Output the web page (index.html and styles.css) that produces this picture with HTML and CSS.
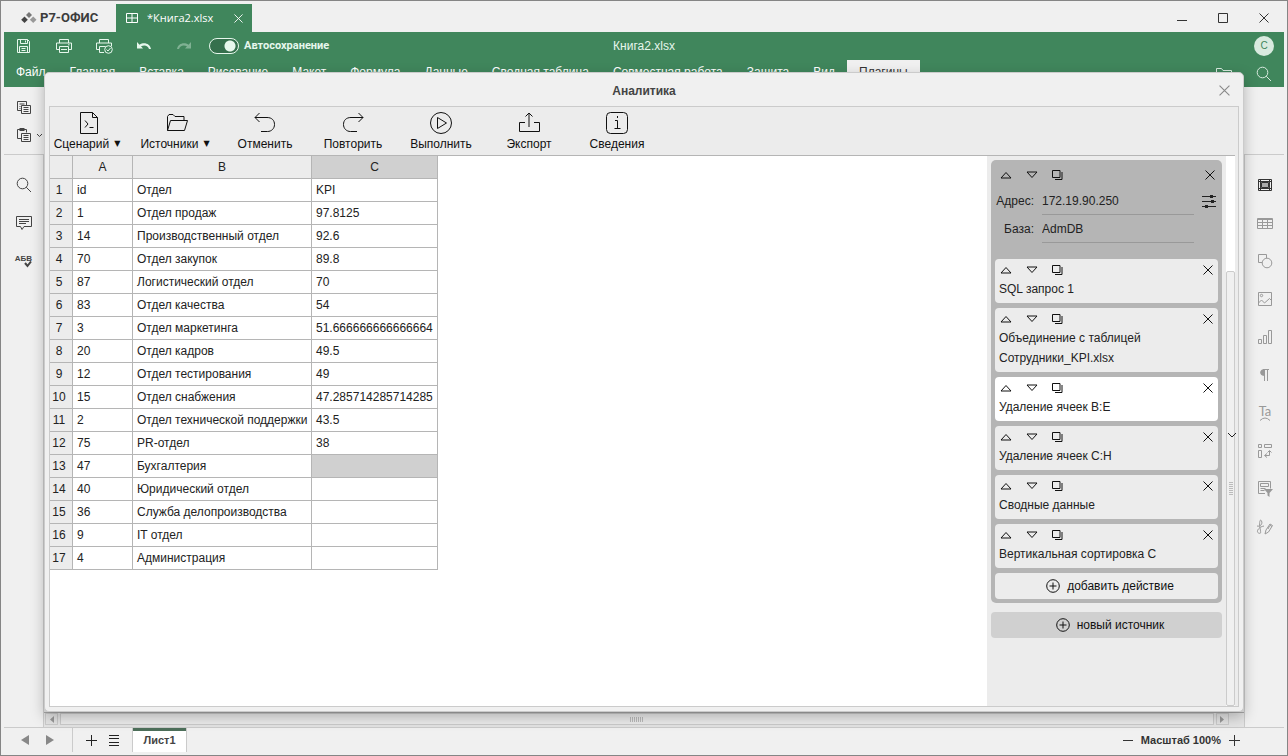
FILE: index.html
```
<!DOCTYPE html>
<html lang="ru">
<head>
<meta charset="utf-8">
<title>Книга2.xlsx</title>
<link rel="stylesheet" href="styles.css">
</head>
<body>
<svg class="sprite" aria-hidden="true">
  <symbol id="up" viewBox="0 0 12 8"><path d="M1 7h10L6 1.5z"/></symbol>
  <symbol id="down" viewBox="0 0 12 8"><path d="M1 1h10L6 6.5z"/></symbol>
  <symbol id="copy" viewBox="0 0 11 10"><path d="M.5.5h7.500v7h-7.500zM10 2v7.500H3" /></symbol>
  <symbol id="cross" viewBox="0 0 10 10"><path d="M.5.5l9 9M9.500.5l-9 9"/></symbol>
  <symbol id="plus-circle" viewBox="0 0 14 14"><circle cx="7" cy="7" r="6.300"/><path d="M7 3.500v7M3.500 7h7"/></symbol>
  <symbol id="search" viewBox="0 0 16 16"><circle cx="6.500" cy="6.500" r="5.300"/><path d="M10.200 10.200l4.800 4.800"/></symbol>
</svg>

<header class="titlebar">
  <div class="brand">
    <svg width="16" height="12" viewBox="0 0 16 12"><path d="M8 0l3 3-3 3-3-3z" fill="#777"/><path d="M3.500 4.500l3.300 3.300-3.300 3.300L.2 7.800z" fill="#444"/><path d="M12.200 4.500l3.300 3.300-3.300 3.300-3.300-3.300z" fill="#999"/></svg>
    <span>Р7-ОФИС</span>
  </div>
  <div class="doc-tab">
    <svg width="12" height="10" viewBox="0 0 12 10"><path d="M.5.5h11v9H.5zM6 .5v9M.5 5h11"/></svg>
    <span>*Книга2.xlsx</span>
    <button class="icon-btn" aria-label="Закрыть вкладку"><svg width="9" height="9"><use href="#cross"/></svg></button>
  </div>
  <div class="window-controls">
    <button class="icon-btn" aria-label="Свернуть"><svg width="10" height="10"><path d="M0 7.500h10"/></svg></button>
    <button class="icon-btn" aria-label="Развернуть"><svg width="10" height="10"><path d="M.5.5h9v9h-9z"/></svg></button>
    <button class="icon-btn" aria-label="Закрыть"><svg width="10" height="10"><use href="#cross"/></svg></button>
  </div>
</header>

<section class="appbar">
  <div class="quick">
    <button class="icon-btn" aria-label="Сохранить"><svg width="16" height="16"><path d="M1.500 1.500h10l2 2v11h-12zM4.500 1.500v4h7v-4M9.500 2.500v2M3.500 14.500v-6h8v6M5.500 10.500h4M5.500 12.500h4"/></svg></button>
    <button class="icon-btn" aria-label="Печать"><svg width="16" height="16"><path d="M3.500 5V1.500h9V5M3.500 11.500h-3V5h15v6.500h-3M3.500 8.500h9v6h-9zM12 6.800h1.500M5 11.500h6"/></svg></button>
    <button class="icon-btn" aria-label="Быстрая печать"><svg width="17" height="16"><path d="M3.500 5V1.500h9V5M3.500 11.500h-3V5h15v3M8 14.500H3.500v-6h6"/><circle cx="12.500" cy="11.500" r="3.800"/><path d="M10.500 11.500l1.500 1.500 2.500-3"/></svg></button>
    <button class="icon-btn" aria-label="Отменить правку"><svg width="16" height="16"><path class="solid" d="M1 4v6.500h6L5 8.300c4-2 7-.3 8 2.700h2C14 5.500 8 3.500 3.500 6.700z"/></svg></button>
    <button class="icon-btn" disabled aria-label="Вернуть правку"><svg width="16" height="16"><path class="solid" d="M15 4v6.500H9l2-2.200c-4-2-7-.3-8 2.700H1C2 5.500 8 3.500 12.500 6.700z"/></svg></button>
    <label class="autosave"><input type="checkbox" checked><span>Автосохранение</span></label>
    <h1>Книга2.xlsx</h1>
    <button class="avatar">C</button>
  </div>
  <nav class="menu">
    <button>Файл</button><button>Главная</button><button>Вставка</button><button>Рисование</button><button>Макет</button><button>Формула</button><button>Данные</button><button>Сводная таблица</button><button>Совместная работа</button><button>Защита</button><button>Вид</button><button class="active">Плагины</button>
    <span class="menu-tools">
      <button class="icon-btn" aria-label="Открыть папку"><svg width="16" height="14"><path d="M.5 13V1.500h5l1.500 2h8.500V13z"/></svg></button>
      <button class="icon-btn" aria-label="Поиск"><svg width="16" height="16"><use href="#search"/></svg></button>
    </span>
  </nav>
</section>

<section class="ribbon">
  <div class="ribbon-tools">
    <button class="icon-btn" aria-label="Копировать"><svg width="16" height="14"><path d="M4 9.500H.5v-9h9V4M2.500 3h5M2.500 5.500h1M2.500 7.500h1M4.500 4.500h9v8h-9zM6.500 6.500h5M6.500 8.500h5M6.500 10.500h5"/></svg></button>
    <div class="paste">
      <button class="icon-btn" aria-label="Вставить"><svg width="16" height="15"><path d="M4 10.500H.5v-9h9V4.500M4.500 5.500h9v8h-9zM6.500 7.500h5M6.500 9.500h5M6.500 11.500h5"/><path class="solid" d="M2.500 0h5v3h-5z"/></svg></button>
      <button class="icon-btn" aria-label="Параметры вставки"><svg width="7" height="5"><path d="M1 1l2.500 2.500L6 1"/></svg></button>
    </div>
  </div>
</section>

<main class="workspace">
  <aside class="side left">
    <button class="icon-btn" aria-label="Найти"><svg width="16" height="16"><use href="#search"/></svg></button>
    <button class="icon-btn" aria-label="Комментарии"><svg width="16" height="16"><path d="M.5 1.500h15v10H8l-2 3-1.500-3h-4zM3 4.500h10M3 6.500h10M3 8.500h7"/></svg></button>
    <button class="icon-btn spell" aria-label="Проверка орфографии"><span>АБВ</span><svg width="8" height="7"><path d="M1 2l2.500 3L7 .5"/></svg></button>
  </aside>
  <div class="sheet">
    <div class="hscroll">
      <button class="icon-btn" aria-label="Влево"><svg width="5" height="7"><path class="solid" d="M5 0v7L1 3.500z"/></svg></button>
      <div class="hthumb"></div>
      <button class="icon-btn" aria-label="Вправо"><svg width="5" height="7"><path class="solid" d="M0 0v7l4-3.500z"/></svg></button>
    </div>
  </div>
  <aside class="side right">
    <button class="icon-btn on" aria-label="Ячейки"><svg width="16" height="16"><path d="M1.500 2.500h13v11h-13zM1.500 4.500h13M1.500 11.500h13M3.500 2.500v11M12.500 2.500v11"/><path class="fillgray" d="M4.500 5.500h7v5h-7z"/></svg></button>
    <button class="icon-btn" aria-label="Таблица"><svg width="16" height="16"><path d="M.5 3.500h15v10H.5zM.5 7.500h15M.5 10.500h15M5.500 4v9M10.500 4v9"/><path d="M.5 4.500h15"/></svg></button>
    <button class="icon-btn" aria-label="Фигура"><svg width="16" height="16"><path d="M5 9.500H1.500v-8h8V5"/><circle cx="10" cy="10" r="4.800"/></svg></button>
    <button class="icon-btn" aria-label="Изображение"><svg width="16" height="16"><path d="M1.500 1.500h13v13h-13zM1.500 12l3-3 3 3 5-4.500 2 2"/><circle cx="4.500" cy="4.500" r="1.200"/></svg></button>
    <button class="icon-btn" aria-label="Диаграмма"><svg width="16" height="16"><path d="M1.500 10.500h3v4h-3zM6.500 6.500h3v8h-3zM11.500 1.500h3v13h-3z"/></svg></button>
    <button class="icon-btn" aria-label="Абзац"><svg width="16" height="16"><path class="solid" d="M8 2v7C1.500 9 1.500 2 8 2z"/><path d="M7.500 2v12M10.500 2v12M6 2.500h6"/></svg></button>
    <button class="icon-btn textart" aria-label="Текст"><span>Ta</span><svg width="10" height="4"><path d="M0 3.500q5-5 10 0"/></svg></button>
    <button class="icon-btn" aria-label="Сводная таблица"><svg width="16" height="16"><path d="M1.500 1.500h3v3h-3zM7.500 1.500h7v3h-7zM1.500 7.500h3v7h-3zM8 12.500h4.500V8M10 10.500l-2.500 2 2.500 2M10.500 9.500l2-2 2 2"/></svg></button>
    <button class="icon-btn" aria-label="Срез"><svg width="16" height="16"><path d="M8 12.500H1.500v-12h12v7M3.500 2.500h8v3h-8zM3.500 7.500h5M3.500 9.500h4"/><path class="solid" d="M7 8h9l-3.500 4v4l-2-1.500V12z"/></svg></button>
    <button class="icon-btn" aria-label="Подпись"><svg width="18" height="16"><path d="M1 7c3 1 6-2 4.500-5S3 4 4 9s1 6-1.500 5S2 8 8 7M9 15l1-4 4-6 2.500 1.500-4 6.500zM13.500 6l2.500 1.500M12 10l1.500-3"/></svg></button>
  </aside>
</main>

<footer class="statusbar">
  <div class="sheet-nav">
    <button class="icon-btn" aria-label="Предыдущий лист"><svg width="8" height="10"><path class="solid" d="M8 0v10L0 5z"/></svg></button>
    <button class="icon-btn" aria-label="Следующий лист"><svg width="8" height="10"><path class="solid" d="M0 0v10l8-5z"/></svg></button>
  </div>
  <div class="sheet-actions">
    <button class="icon-btn" aria-label="Добавить лист"><svg width="11" height="11"><path d="M5.500 0v11M0 5.500h11"/></svg></button>
    <button class="icon-btn" aria-label="Список листов"><svg width="10" height="11"><path d="M0 .5h10M0 3.500h10M0 7.500h10M0 10.500h10"/></svg></button>
  </div>
  <button class="sheet-tab">Лист1</button>
  <div class="zoom">
    <button class="icon-btn" aria-label="Уменьшить"><svg width="10" height="11"><path d="M0 5.500h10"/></svg></button>
    <span>Масштаб 100%</span>
    <button class="icon-btn" aria-label="Увеличить"><svg width="11" height="11"><path d="M5.500 0v11M0 5.500h11"/></svg></button>
  </div>
</footer>

<section class="dialog" role="dialog" aria-labelledby="dialog-title">
  <header class="dialog-head">
    <h2 id="dialog-title">Аналитика</h2>
    <button class="icon-btn" aria-label="Закрыть окно"><svg width="11" height="11" viewBox="0 0 10 10"><use href="#cross"/></svg></button>
  </header>
  <div class="dialog-body">
    <div class="toolbar">
      <button><svg width="24" height="24"><path d="M3.500 1.500h12l5 5v16h-17zM15.500 1.500v5h5M8 9.500l3 3.500-3 3.500M12.500 16.500h4"/></svg><span>Сценарий<i>▼</i></span></button>
      <button><svg width="24" height="24"><path d="M2.500 19.500v-14l1.500-2h4l2 2h9v4M2.500 19.500l3-10h17l-3 10z"/></svg><span>Источники<i>▼</i></span></button>
      <button><svg width="24" height="24"><path d="M6.500 2L2 6.500 6.500 11M2 6.500h12c5 0 7.500 3 7.500 7s-3 7-7 7H8"/></svg><span>Отменить</span></button>
      <button><svg width="24" height="24"><path d="M17.500 2L22 6.500 17.500 11M22 6.500H10c-5 0-7.500 3-7.500 7s3 7 7 7H16"/></svg><span>Повторить</span></button>
      <button><svg width="24" height="24"><circle cx="12" cy="12" r="10.500"/><path d="M8.500 6.500v11l9-5.500z"/></svg><span>Выполнить</span></button>
      <button><svg width="24" height="24"><path d="M12 16V2M8.500 5.500L12 2l3.500 3.500M8 11.500H2.500v9h20v-9H17"/></svg><span>Экспорт</span></button>
      <button><svg width="24" height="24"><rect x="1.500" y="1.500" width="21" height="21" rx="4"/><path d="M10 9.500h2.500v8M9.500 17.500h6M12.500 5v2"/></svg><span>Сведения</span></button>
    </div>
    <div class="content">
      <div class="grid">
        <table>
          <colgroup><col class="c-num"><col class="c-a"><col class="c-b"><col class="c-c"></colgroup>
          <thead><tr><th></th><th>A</th><th>B</th><th class="sel">C</th></tr></thead>
          <tbody>
            <tr><th>1</th><td>id</td><td>Отдел</td><td>KPI</td></tr>
            <tr><th>2</th><td>1</td><td>Отдел продаж</td><td>97.8125</td></tr>
            <tr><th>3</th><td>14</td><td>Производственный отдел</td><td>92.6</td></tr>
            <tr><th>4</th><td>70</td><td>Отдел закупок</td><td>89.8</td></tr>
            <tr><th>5</th><td>87</td><td>Логистический отдел</td><td>70</td></tr>
            <tr><th>6</th><td>83</td><td>Отдел качества</td><td>54</td></tr>
            <tr><th>7</th><td>3</td><td>Отдел маркетинга</td><td>51.666666666666664</td></tr>
            <tr><th>8</th><td>20</td><td>Отдел кадров</td><td>49.5</td></tr>
            <tr><th>9</th><td>12</td><td>Отдел тестирования</td><td>49</td></tr>
            <tr><th>10</th><td>15</td><td>Отдел снабжения</td><td>47.285714285714285</td></tr>
            <tr><th>11</th><td>2</td><td>Отдел технической поддержки</td><td>43.5</td></tr>
            <tr><th>12</th><td>75</td><td>PR-отдел</td><td>38</td></tr>
            <tr><th>13</th><td>47</td><td>Бухгалтерия</td><td class="sel"></td></tr>
            <tr><th>14</th><td>40</td><td>Юридический отдел</td><td></td></tr>
            <tr><th>15</th><td>36</td><td>Служба делопроизводства</td><td></td></tr>
            <tr><th>16</th><td>9</td><td>IT отдел</td><td></td></tr>
            <tr><th>17</th><td>4</td><td>Администрация</td><td></td></tr>
          </tbody>
        </table>
      </div>
      <div class="pipeline">
        <article class="source">
          <div class="controls"><button class="icon-btn" aria-label="Выше"><svg width="12" height="8"><use href="#up"/></svg></button><button class="icon-btn" aria-label="Ниже"><svg width="12" height="8"><use href="#down"/></svg></button><button class="icon-btn" aria-label="Дублировать"><svg width="11" height="10"><use href="#copy"/></svg></button><button class="icon-btn remove" aria-label="Удалить"><svg width="10" height="10"><use href="#cross"/></svg></button></div>
          <div class="fields">
            <label for="addr">Адрес:</label><input id="addr" type="text" value="172.19.90.250">
            <button class="icon-btn" aria-label="Настройки"><svg width="14" height="14"><path d="M0 2.500h14M0 7.500h14M0 12.500h14"/><path class="solid" d="M8 1h3v3H8zM9 6h3v3H9zM3 11h3v3H3z"/></svg></button>
            <label for="base">База:</label><input id="base" type="text" value="AdmDB">
          </div>
          <div class="step"><div class="controls"><button class="icon-btn" aria-label="Выше"><svg width="12" height="8"><use href="#up"/></svg></button><button class="icon-btn" aria-label="Ниже"><svg width="12" height="8"><use href="#down"/></svg></button><button class="icon-btn" aria-label="Дублировать"><svg width="11" height="10"><use href="#copy"/></svg></button><button class="icon-btn remove" aria-label="Удалить"><svg width="10" height="10"><use href="#cross"/></svg></button></div><p>SQL запрос 1</p></div>
          <div class="step"><div class="controls"><button class="icon-btn" aria-label="Выше"><svg width="12" height="8"><use href="#up"/></svg></button><button class="icon-btn" aria-label="Ниже"><svg width="12" height="8"><use href="#down"/></svg></button><button class="icon-btn" aria-label="Дублировать"><svg width="11" height="10"><use href="#copy"/></svg></button><button class="icon-btn remove" aria-label="Удалить"><svg width="10" height="10"><use href="#cross"/></svg></button></div><p>Объединение с таблицей<br>Сотрудники_KPI.xlsx</p></div>
          <div class="step current"><div class="controls"><button class="icon-btn" aria-label="Выше"><svg width="12" height="8"><use href="#up"/></svg></button><button class="icon-btn" aria-label="Ниже"><svg width="12" height="8"><use href="#down"/></svg></button><button class="icon-btn" aria-label="Дублировать"><svg width="11" height="10"><use href="#copy"/></svg></button><button class="icon-btn remove" aria-label="Удалить"><svg width="10" height="10"><use href="#cross"/></svg></button></div><p>Удаление ячеек B:E</p></div>
          <div class="step"><div class="controls"><button class="icon-btn" aria-label="Выше"><svg width="12" height="8"><use href="#up"/></svg></button><button class="icon-btn" aria-label="Ниже"><svg width="12" height="8"><use href="#down"/></svg></button><button class="icon-btn" aria-label="Дублировать"><svg width="11" height="10"><use href="#copy"/></svg></button><button class="icon-btn remove" aria-label="Удалить"><svg width="10" height="10"><use href="#cross"/></svg></button></div><p>Удаление ячеек C:H</p></div>
          <div class="step"><div class="controls"><button class="icon-btn" aria-label="Выше"><svg width="12" height="8"><use href="#up"/></svg></button><button class="icon-btn" aria-label="Ниже"><svg width="12" height="8"><use href="#down"/></svg></button><button class="icon-btn" aria-label="Дублировать"><svg width="11" height="10"><use href="#copy"/></svg></button><button class="icon-btn remove" aria-label="Удалить"><svg width="10" height="10"><use href="#cross"/></svg></button></div><p>Сводные данные</p></div>
          <div class="step"><div class="controls"><button class="icon-btn" aria-label="Выше"><svg width="12" height="8"><use href="#up"/></svg></button><button class="icon-btn" aria-label="Ниже"><svg width="12" height="8"><use href="#down"/></svg></button><button class="icon-btn" aria-label="Дублировать"><svg width="11" height="10"><use href="#copy"/></svg></button><button class="icon-btn remove" aria-label="Удалить"><svg width="10" height="10"><use href="#cross"/></svg></button></div><p>Вертикальная сортировка C</p></div>
          <button class="add"><svg width="14" height="14"><use href="#plus-circle"/></svg>добавить действие</button>
        </article>
        <button class="add new-source"><svg width="14" height="14"><use href="#plus-circle"/></svg>новый источник</button>
      </div>
      <div class="vscroll">
        <div class="vthumb">
          <span class="grip"></span>
          <svg class="chevron" width="10" height="6"><path d="M1 1l4 4 4-4"/></svg>
        </div>
      </div>
    </div>
  </div>
</section>
</body>
</html>
```

FILE: styles.css
```
* { box-sizing: border-box; }

body {
  margin: 0;
  height: 100vh;
  display: flex;
  flex-direction: column;
  position: relative;
  padding: 0 3px;
  border: 1px solid #858585;
  background: #f0f0f0;
  color: #222;
  font: 12px/20px "Liberation Sans", Arial, sans-serif;
  overflow: hidden;
}

button, input { font: inherit; color: inherit; }
button { border: 0; padding: 0; margin: 0; background: none; white-space: nowrap; }
h1, h2, p { margin: 0; font-size: inherit; }
svg { display: block; fill: none; stroke: currentColor; stroke-width: 1; flex: none; }
.solid { fill: currentColor; stroke: none; }
.fillgray { fill: #aaa; }
.sprite { display: none; }
.icon-btn { display: flex; align-items: center; justify-content: center; }

/* Title bar */
.titlebar { flex: none; height: 31px; display: flex; align-items: flex-end; }
.brand {
  width: 112px;
  height: 28px;
  display: flex;
  align-items: center;
  gap: 3px;
  padding-left: 17px;
  color: #3c3c3c;
  font: bold 13px/28px Roboto, sans-serif;
}
.brand svg { stroke: none; }
.doc-tab {
  width: 136px;
  height: 28px;
  display: flex;
  align-items: center;
  padding: 0 9px 0 10px;
  background: #40865c;
  color: #fff;
  font: 11px/28px "Open Sans", sans-serif;
}
.doc-tab span { flex: 1; padding-left: 9px; }
.window-controls {
  margin-left: auto;
  height: 31px;
  display: flex;
  align-items: center;
  gap: 31px;
  padding: 2px 15px 0 0;
  color: #333;
}

/* Green header */
.appbar { flex: none; height: 55px; background: #40865c; color: #fff; }
.quick {
  position: relative;
  height: 28px;
  display: flex;
  align-items: center;
  padding: 0 10px 0 12px;
  color: #e6f7ec;
}
.quick > .icon-btn { width: 16px; margin-right: 24px; }
.quick > .icon-btn:disabled { color: #7fb193; }
.autosave {
  display: flex;
  align-items: center;
  gap: 5px;
  margin-left: -7px;
  font: bold 11px/20px Roboto, sans-serif;
}
.autosave input {
  appearance: none;
  width: 30px;
  height: 16px;
  margin: 0;
  border: 1px solid #e6f7ec;
  border-radius: 8px;
  background: radial-gradient(circle at 20px 7px, #e6f7ec 5px, #35704d 6px);
}
.quick h1 {
  position: absolute;
  left: 0;
  right: 0;
  text-align: center;
  font-weight: normal;
  font-size: 12px;
  pointer-events: none;
}
.avatar {
  width: 20px;
  height: 20px;
  margin-left: auto;
  border-radius: 50%;
  background: #d9eadf;
  color: #40865c;
  font-size: 10px;
}
.menu { height: 27px; display: flex; font-size: 12px; }
.menu > button { padding: 0 12px; line-height: 24px; height: 27px; padding-bottom: 3px; }
.menu > .active { background: #f0f0f0; color: #333; }
.menu-tools { margin-left: auto; display: flex; gap: 24px; padding-right: 12px; color: #d9eadf; }

/* Ribbon */
.ribbon { flex: none; height: 68px; border-bottom: 1px solid #cbcbcb; color: #444; }
.ribbon-tools { padding: 14px 0 0 13px; display: flex; flex-direction: column; gap: 13px; align-items: flex-start; }
.paste { display: flex; gap: 3px; }

/* Sheet area */
.workspace { flex: 1; min-height: 0; display: flex; }
.side { width: 40px; display: flex; flex-direction: column; align-items: center; padding-top: 22px; gap: 22px; color: #444; }
.side .icon-btn { height: 16px; }
.left { border-right: 1px solid #cbcbcb; }
.right { border-left: 1px solid #cbcbcb; color: #999; padding-left: 1px; }
.right .on { color: #333; }
.spell { flex-direction: column; }
.spell span { font: bold 8px/8px "Liberation Sans", sans-serif; }
.spell svg { margin: -2px 0 0 8px; stroke-width: 2; }
.textart { flex-direction: column; }
.textart span { font: 13px/12px Lato, sans-serif; }
.sheet { flex: 1; display: flex; flex-direction: column; justify-content: flex-end; background: #e4e4e4; }
.hscroll {
  height: 15px;
  display: flex;
  gap: 2px;
  padding: 0 15px 2px 1px;
  border-top: 1px solid #a8a8a8;
  background: #e4e4e4;
}
.hscroll .icon-btn { width: 13px; border: 1px solid #cbcbcb; color: #999; }
.hthumb { flex: 1; border: 1px solid #cbcbcb; background: repeating-linear-gradient(90deg, #bbb 0 1px, transparent 1px 2px) center / 14px 5px no-repeat #ececec; }

/* Status bar */
.statusbar { flex: none; height: 28px; display: flex; border-top: 1px solid #cbcbcb; color: #222; }
.sheet-nav { width: 69px; display: flex; align-items: center; gap: 17px; padding: 0 0 0 17px; margin-bottom: 3px; border-right: 1px solid #cbcbcb; color: #888; }
.sheet-actions { width: 59px; display: flex; align-items: center; gap: 12px; padding-left: 13px; margin-bottom: 3px; }
.sheet-tab {
  width: 55px;
  height: 24px;
  border: 1px solid #cbcbcb;
  border-width: 0 1px;
  background: linear-gradient(#4d6f5a 3px, #fff 3px);
  color: #444;
  font-size: 11px;
  font-weight: bold;
}
.zoom { margin-left: auto; display: flex; align-items: center; gap: 8px; padding: 0 44px 0 0; margin-bottom: 3px; color: #333; font-size: 11px; font-weight: bold; }

/* Dialog window over the workspace */
.dialog {
  position: absolute;
  inset: 71px 43px 43px;
  display: flex;
  flex-direction: column;
  padding: 0 4px 4px;
  border: 1px solid #cbcbcb;
  border-radius: 5px;
  background: #f0f0f0;
  box-shadow: 0 5px 14px rgba(0, 0, 0, .25);
}
.dialog-head { height: 33px; display: flex; align-items: center; position: relative; justify-content: flex-end; padding: 2px 9px 0 0; color: #888; }
.dialog-head h2 { flex: 1; padding-left: 20px; text-align: center; color: #444; }
.dialog-body { flex: 1; min-height: 0; display: flex; flex-direction: column; border: 1px solid #cbcbcb; background: #ececec; }
.toolbar { flex: none; height: 49px; display: flex; gap: 10px; margin-right: 3px; border-bottom: 1px solid #b5b5b5; color: #111; }
.toolbar button { width: 78px; display: flex; flex-direction: column; align-items: center; padding-top: 4px; }
.toolbar span { line-height: 18px; }
.toolbar i { margin: 0 4px 0 5px; font: 8px/8px "DejaVu Sans", sans-serif; vertical-align: 2px; }
.content { flex: 1; min-height: 0; display: flex; margin-right: 3px; }
.grid { flex: 1; background: #fff; overflow: hidden; }

table { border-collapse: separate; border-spacing: 0; table-layout: fixed; width: 388px; }
.c-num { width: 23px; }
.c-a { width: 60px; }
.c-b { width: 179px; }
.c-c { width: 126px; }
th, td { height: 23px; padding: 0 0 0 4px; border: 1px solid #b5b5b5; border-width: 0 1px 1px 0; line-height: 22px; text-align: left; white-space: nowrap; }
th { padding: 0; background: #ececec; font-weight: normal; text-align: center; }
tbody th { padding-right: 4px; }
th.sel, td.sel { background: #d0d0d0; }

/* Steps column */
.pipeline { width: 239px; padding: 4px; overflow: hidden; }
.source { display: flex; flex-direction: column; gap: 5px; padding: 4px; border-radius: 5px; background: #b5b5b5; }
.controls { height: 20px; display: flex; align-items: center; gap: 14px; padding: 1px 5px 0; color: #111; }
.controls .remove { margin-left: auto; }
.source > .controls { padding-right: 3px; }
.fields { display: grid; grid-template-columns: 39px 152px 14px; column-gap: 8px; margin-top: -2px; padding-bottom: 11px; }
.fields label { text-align: right; line-height: 28px; }
.fields input { height: 28px; padding: 0; border: 0; border-bottom: 1px solid #999; outline: 0; background: none; width: 152px; }
.fields .icon-btn { height: 28px; }
.step { padding-bottom: 4px; border-radius: 4px; background: #ececec; }
.step.current { background: #fff; }
.step p { padding: 0 4px; }
.add { width: 100%; height: 26px; display: flex; align-items: center; justify-content: center; gap: 7px; padding-left: 7px; border-radius: 4px; background: #ececec; color: #111; }
.new-source { margin-top: 9px; background: #d0d0d0; }

.vscroll { width: 9px; padding-top: 115px; background: #fff; display: flex; }
.vthumb { flex: 1; display: flex; align-items: center; justify-content: center; position: relative; border: 1px solid #cbcbcb; border-radius: 2px; background: #f0f0f0; }
.grip { width: 4px; height: 13px; background: repeating-linear-gradient(#bbb 0 1px, transparent 1px 2px); }
.chevron { position: absolute; top: 160px; left: 0; }
```
